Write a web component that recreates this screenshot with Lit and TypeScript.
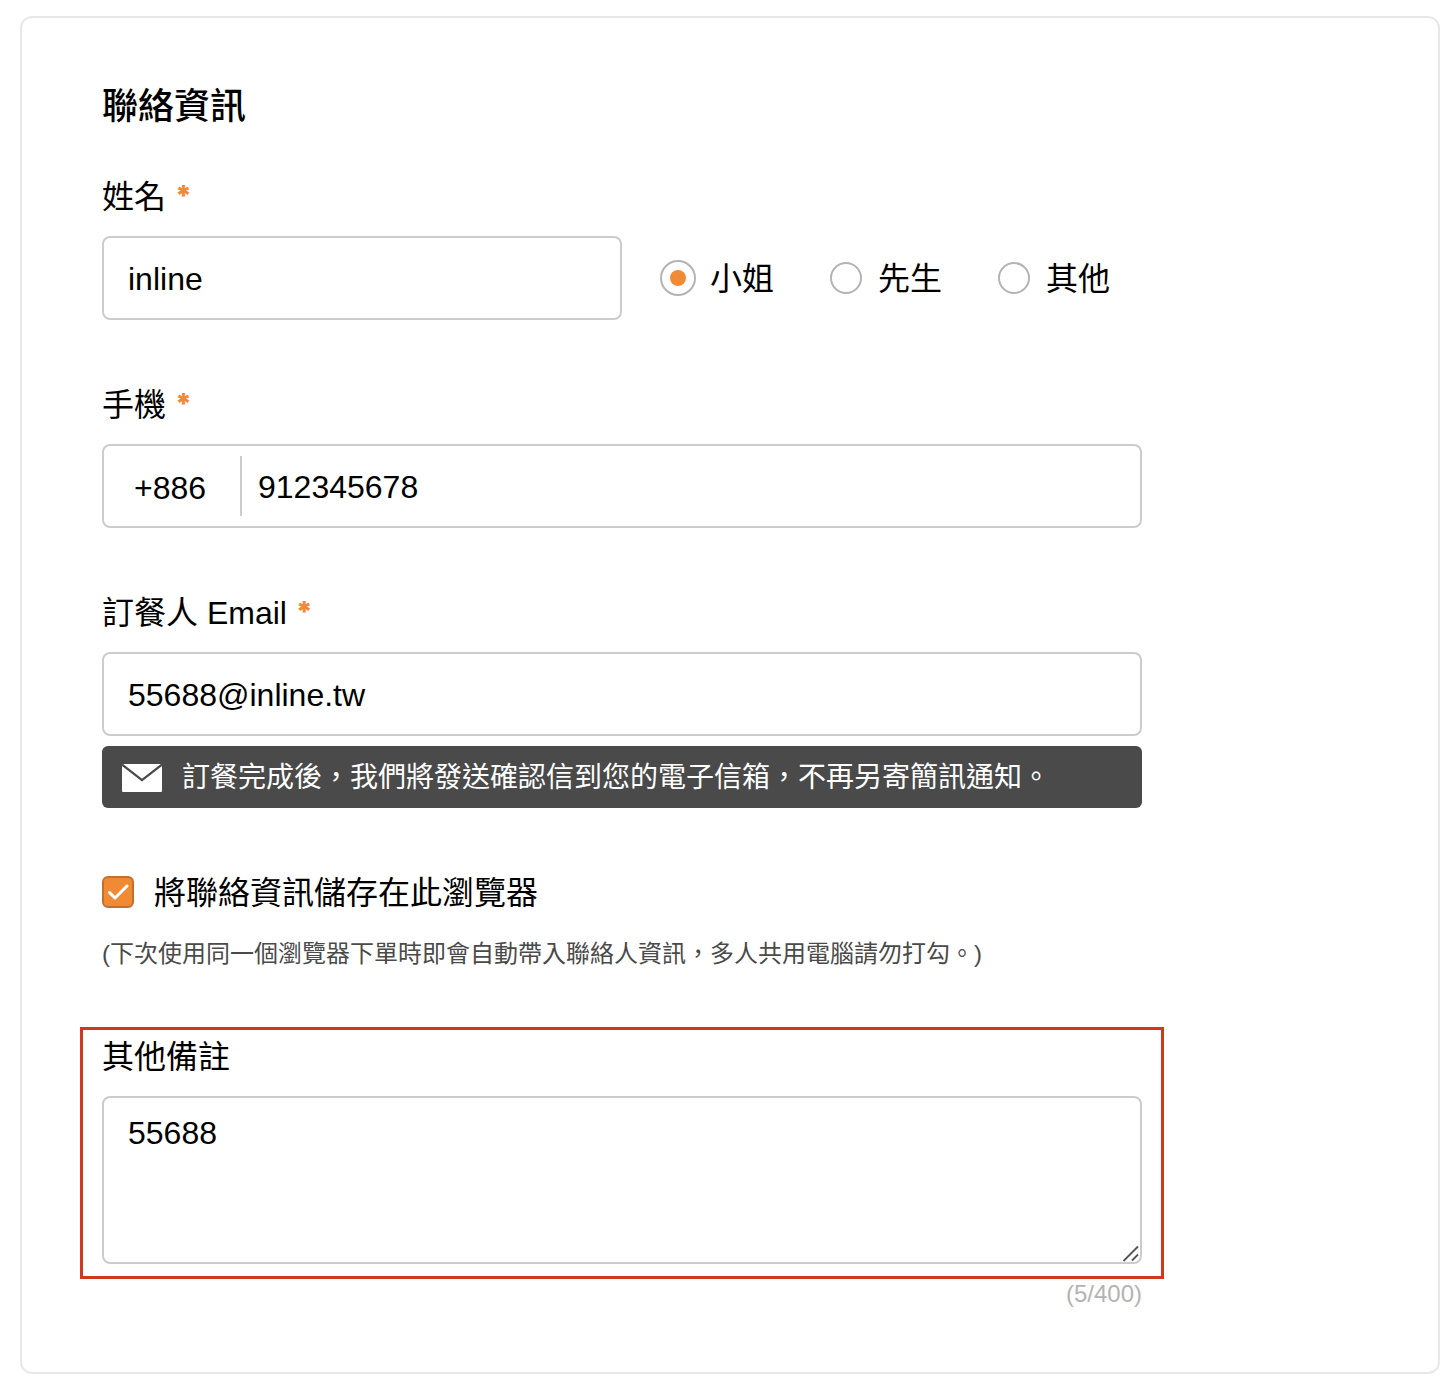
import { LitElement, html, css, svg } from 'lit';
import { customElement, state } from 'lit/decorators.js';

const TITLES = [
    { value: 'ms', label: '小姐' },
    { value: 'mr', label: '先生' },
    { value: 'other', label: '其他' }
];

const NOTE_LIMIT = 400;

const checkMark = svg`<path d="M7.5 16.5 L13 22 L25 10" fill="none" stroke="#fff" stroke-width="3" stroke-linecap="round" stroke-linejoin="round"></path>`;

/**
 * Contact details card of the booking form
 */
@customElement('app-root')
export class AppRoot extends LitElement {
    @state() private title = 'ms';
    @state() private note = '55688';

    static styles = css`
        :host {
            display: block;
            --accent: #f08a35;
            --border: #cccccc;
            --muted: #4a4a4a;
            padding: 16px 16px 16px 20px;
            background: #fff;
            color: #000;
            font-family: 'Liberation Sans', 'Noto Sans CJK TC', sans-serif;
            font-size: 32px;
            line-height: 50px;
        }

        * {
            box-sizing: border-box;
        }

        .card {
            border: 2px solid #e8e8e8;
            border-radius: 12px;
            padding: 60px 80px 64px;
        }

        form {
            display: flex;
            flex-direction: column;
            gap: 60px;
            max-width: 1040px;
        }

        h2 {
            margin: 0 0 36px;
            font-size: 36px;
            line-height: 58px;
            font-weight: 500;
        }

        .label {
            display: block;
            margin-bottom: 14px;
        }

        .required {
            color: var(--accent);
            font-family: Inter, sans-serif;
            font-size: 28px;
            font-weight: 900;
            line-height: 1;
            vertical-align: 2px;
        }

        input,
        select,
        textarea {
            margin: 0;
            font: inherit;
            color: inherit;
            background: none;
            outline: none;
        }

        .box {
            display: block;
            width: 100%;
            height: 84px;
            border: 2px solid var(--border);
            border-radius: 8px;
            padding: 2px 24px 0;
        }

        .name-row {
            display: flex;
            align-items: center;
            gap: 38px;
        }

        .name-row .box {
            flex: 0 0 50%;
            width: 50%;
        }

        .titles {
            display: flex;
            gap: 54px;
        }

        .title {
            display: flex;
            align-items: center;
            gap: 14px;
            white-space: nowrap;
        }

        .title span,
        .save > span:last-child {
            padding-top: 2px;
        }

        .title input {
            appearance: none;
            width: 32px;
            height: 32px;
            margin: 2px;
            border: 2px solid #b3b3b3;
            border-radius: 50%;
        }

        .title input:checked {
            width: 36px;
            height: 36px;
            margin: 0;
            padding: 8px;
            background: var(--accent) content-box;
        }

        .phone {
            display: flex;
            align-items: center;
            padding: 0;
        }

        .phone select {
            appearance: none;
            width: 138px;
            height: 60px;
            padding: 4px 0 0 30px;
            border: 0;
            border-right: 2px solid var(--border);
            border-radius: 0;
        }

        .phone input {
            flex: 1;
            min-width: 0;
            height: 100%;
            padding: 2px 16px 0;
            border: 0;
        }

        .notice {
            display: flex;
            align-items: center;
            gap: 20px;
            margin: 10px 0 0;
            padding: 11px 20px 9px;
            border-radius: 6px;
            background: var(--muted);
            color: #fff;
            font-size: 28px;
            line-height: 42px;
        }

        .notice svg {
            flex: none;
            width: 40px;
            height: 28px;
        }

        .save {
            display: flex;
            align-items: center;
            gap: 20px;
            height: 48px;
        }

        .tick {
            display: grid;
            flex: none;
            width: 32px;
            height: 32px;
        }

        .tick > * {
            grid-area: 1 / 1;
            width: 32px;
            height: 32px;
        }

        .tick input {
            appearance: none;
            border: 2px solid #b3b3b3;
            border-radius: 6px;
        }

        .tick input:checked {
            border-color: #c2702c;
            background: var(--accent);
        }

        .tick svg {
            visibility: hidden;
            pointer-events: none;
        }

        .tick input:checked + svg {
            visibility: visible;
        }

        .hint {
            margin: 20px 0 0;
            color: var(--muted);
            font-size: 24px;
            line-height: 36px;
        }

        /* The frame reaches past the column on both sides */
        .highlight {
            margin: -5px -22px 0;
            padding: 2px 19px 12px;
            border: 3px solid #d23820;
        }

        .area {
            position: relative;
        }

        textarea.box {
            height: 168px;
            padding: 10px 24px;
            resize: none;
        }

        .grip {
            position: absolute;
            right: 2px;
            bottom: 2px;
            width: 18px;
            height: 18px;
            pointer-events: none;
        }

        .counter {
            display: block;
            color: #b3b3b3;
            font-size: 24px;
            line-height: 29px;
            text-align: right;
        }
    `;

    private onNoteInput(e: Event) {
        this.note = (e.target as HTMLTextAreaElement).value;
    }

    private renderLabel(id: string, text: string) {
        return html`<label class="label" for=${id}>${text} <span class="required">*</span></label>`;
    }

    render() {
        return html`
            <section class="card">
                <h2>聯絡資訊</h2>
                <form>
                    <div>
                        ${this.renderLabel('name', '姓名')}
                        <div class="name-row">
                            <input class="box" id="name" type="text" .value=${'inline'} />
                            <div class="titles" role="radiogroup" aria-label="稱謂">
                                ${TITLES.map(t => html`
                                    <label class="title">
                                        <input
                                            type="radio"
                                            name="title"
                                            value=${t.value}
                                            .checked=${this.title === t.value}
                                            @change=${() => { this.title = t.value; }}
                                        />
                                        <span>${t.label}</span>
                                    </label>
                                `)}
                            </div>
                        </div>
                    </div>

                    <div>
                        ${this.renderLabel('phone', '手機')}
                        <div class="box phone">
                            <select aria-label="國碼">
                                <option>+886</option>
                            </select>
                            <input id="phone" type="tel" .value=${'912345678'} />
                        </div>
                    </div>

                    <div>
                        ${this.renderLabel('email', '訂餐人 Email')}
                        <input class="box" id="email" type="email" .value=${'55688@inline.tw'} />
                        <p class="notice">
                            <svg viewBox="0 0 40 28" aria-hidden="true">
                                <rect width="40" height="28" rx="1" fill="#fff"></rect>
                                <path d="M0 0.5 L20 16 L40 0.5" fill="none" stroke="#4a4a4a" stroke-width="2.2"></path>
                            </svg>
                            <span>訂餐完成後，我們將發送確認信到您的電子信箱，不再另寄簡訊通知。</span>
                        </p>
                    </div>

                    <div>
                        <label class="save">
                            <span class="tick">
                                <input type="checkbox" .checked=${true} />
                                <svg viewBox="0 0 32 32" aria-hidden="true">${checkMark}</svg>
                            </span>
                            <span>將聯絡資訊儲存在此瀏覽器</span>
                        </label>
                        <p class="hint">(下次使用同一個瀏覽器下單時即會自動帶入聯絡人資訊，多人共用電腦請勿打勾。)</p>
                    </div>

                    <div>
                        <div class="highlight">
                            <label class="label" for="note">其他備註</label>
                            <div class="area">
                                <textarea
                                    class="box"
                                    id="note"
                                    maxlength=${NOTE_LIMIT}
                                    .value=${this.note}
                                    @input=${this.onNoteInput}
                                ></textarea>
                                <svg class="grip" viewBox="0 0 18 18" aria-hidden="true">
                                    <path d="M1.5 17 L16 2.5 M10 16.5 L16 10.5" fill="none" stroke="#555" stroke-width="1.8"></path>
                                </svg>
                            </div>
                        </div>
                        <output class="counter" for="note">(${this.note.length}/${NOTE_LIMIT})</output>
                    </div>
                </form>
            </section>
        `;
    }
}
